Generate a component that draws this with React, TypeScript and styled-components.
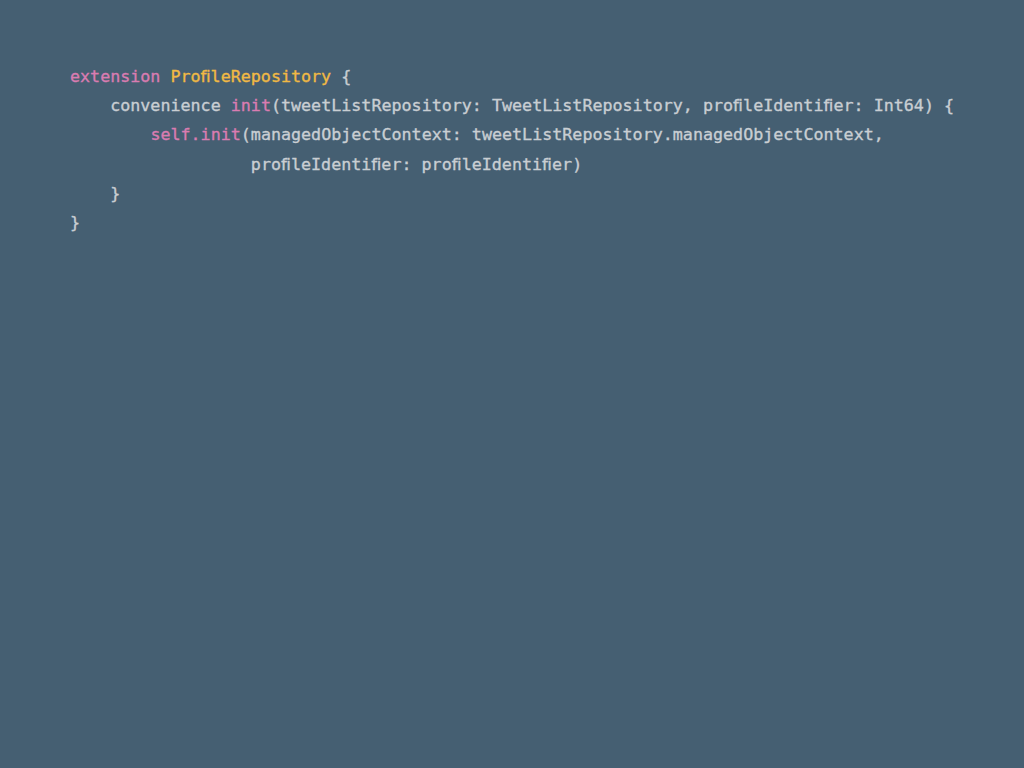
import React from 'react';
import styled, { createGlobalStyle } from 'styled-components';

type TokenKind = 'plain' | 'keyword' | 'type';

type Token = {
  text: string;
  kind?: TokenKind;
};

const codeLines: Token[][] = [
  [{ text: 'extension', kind: 'keyword' }, { text: ' ' }, { text: 'ProfileRepository', kind: 'type' }, { text: ' {' }],
  [
    { text: '    convenience ' },
    { text: 'init', kind: 'keyword' },
    { text: '(tweetListRepository: TweetListRepository, profileIdentifier: Int64) {' },
  ],
  [
    { text: '        ' },
    { text: 'self.init', kind: 'keyword' },
    { text: '(managedObjectContext: tweetListRepository.managedObjectContext,' },
  ],
  [{ text: '                  profileIdentifier: profileIdentifier)' }],
  [{ text: '    }' }],
  [{ text: '}' }],
];

const colors: Record<TokenKind, string> = {
  plain: '#c9ced3',
  keyword: '#d97cb1',
  type: '#f0b944',
};

// the reference font draws "fi" as one ligature that takes a single cell
const renderText = (text: string) =>
  text.split('fi').flatMap((part, i) => (i === 0 ? [part] : [<Ligature key={i}>fi</Ligature>, part]));

const App = () => (
  <>
    <GlobalStyle />
    <Slide>
      <CodeBlock>
        {codeLines.map((tokens, row) => (
          <CodeLine key={row}>
            {tokens.map(({ text, kind = 'plain' }, i) => (
              <CodeToken key={i} kind={kind}>
                {renderText(text)}
              </CodeToken>
            ))}
          </CodeLine>
        ))}
      </CodeBlock>
    </Slide>
  </>
);

const GlobalStyle = createGlobalStyle`
  html, body {
    margin: 0;
    padding: 0;
    background: #455f72;
  }
`;

const Slide = styled.main`
  width: 1024px;
  height: 768px;
  box-sizing: border-box;
  padding: 62px 0 0 70px;
  background: #455f72;
`;

const CodeBlock = styled.pre`
  margin: 0;
  font-family: 'DejaVu Sans Mono', 'Liberation Mono', monospace;
  font-size: 16.7px;
  line-height: 29.2px;
  color: ${colors.plain};
  -webkit-text-stroke: 0.35px currentColor;
`;

const CodeLine = styled.div`
  white-space: pre;
`;

const CodeToken = styled.span<{ kind: TokenKind }>`
  color: ${({ kind }) => colors[kind]};
`;

const Ligature = styled.span`
  display: inline-block;
  width: 10px;
  font-family: 'DejaVu Sans', sans-serif;
  letter-spacing: -0.6px;
  white-space: nowrap;
`;

export default App;
